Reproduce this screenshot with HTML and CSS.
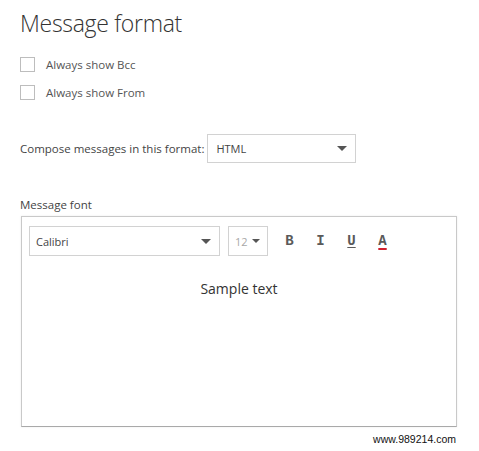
FILE: index.html
```html
<!DOCTYPE html>
<html lang="en">
<head>
<meta charset="utf-8">
<title>Message format</title>
<link rel="stylesheet" href="styles.css">
</head>
<body>
<div class="page">
  <h1 class="title">Message format</h1>

  <label class="check-row"><span class="checkbox"></span><span class="check-label">Always show Bcc</span></label>
  <label class="check-row"><span class="checkbox"></span><span class="check-label">Always show From</span></label>

  <div class="compose-row">
    <span class="compose-label">Compose messages in this format:</span>
    <div class="select select-format">
      <span class="select-value">HTML</span>
      <span class="caret"></span>
    </div>
  </div>

  <div class="section-label">Message font</div>

  <div class="font-box">
    <div class="toolbar">
      <div class="select select-font">
        <span class="select-value">Calibri</span>
        <span class="caret"></span>
      </div>
      <div class="select select-size">
        <span class="select-value muted">12</span>
        <span class="caret small"></span>
      </div>
      <span class="tool tool-b">B</span>
      <span class="tool tool-i">I</span>
      <span class="tool tool-u">U</span>
      <span class="tool tool-a">A</span>
    </div>
    <div class="sample">Sample text</div>
  </div>

  <div class="footer">www.989214.com</div>
</div>
</body>
</html>
```
FILE: styles.css
```css
html, body {
  margin: 0;
  background: #fff;
}

body {
  font-family: "Open Sans", "Noto Sans", sans-serif;
  color: #444;
}

.page {
  width: 436px;
  padding: 7px 0 0 20px;
  display: flex;
  flex-direction: column;
}

.title {
  margin: 0;
  font-size: 23px;
  line-height: 32px;
  font-weight: 300;
  color: #333;
  letter-spacing: -0.3px;
}

.check-row {
  display: flex;
  align-items: center;
  height: 28px;
  gap: 11px;
}

.check-row:first-of-type {
  margin-top: 11px;
}

.checkbox {
  width: 13px;
  height: 13px;
  border: 1px solid #bdbdbd;
  background: #fff;
}

.check-label {
  font-size: 11.5px;
  color: #555;
}

.compose-row {
  display: flex;
  align-items: center;
  margin-top: 28px;
  gap: 3px;
}

.compose-label {
  font-size: 11.5px;
  color: #444;
}

.select {
  display: flex;
  align-items: center;
  justify-content: space-between;
  box-sizing: border-box;
  border: 1px solid #d2d2d2;
  background: #fff;
}

.select-format {
  width: 149px;
  height: 29px;
  padding: 0 8px 0 8px;
}

.select-value {
  font-size: 11px;
  color: #444;
}

.select-value.muted {
  color: #a8a8a8;
}

.caret {
  width: 0;
  height: 0;
  border-left: 5px solid transparent;
  border-right: 5px solid transparent;
  border-top: 5px solid #555;
}

.caret.small {
  border-left-width: 4px;
  border-right-width: 4px;
  border-top-width: 4px;
}

.section-label {
  margin-top: 32px;
  font-size: 11.5px;
  line-height: 20px;
  color: #444;
}

.font-box {
  box-sizing: border-box;
  width: 436px;
  height: 211px;
  margin-left: 1px;
  margin-top: 1px;
  border: 1px solid #c9c9c9;
  border-bottom-color: #a9a9a9;
  box-shadow: 0 0 2px rgba(0, 0, 0, 0.08);
  display: flex;
  flex-direction: column;
}

.toolbar {
  display: flex;
  align-items: center;
  padding: 9px 0 0 7px;
}

.select-font {
  width: 191px;
  height: 30px;
  padding: 0 8px 0 6px;
}

.select-size {
  width: 40px;
  height: 30px;
  margin-left: 8px;
  padding: 0 7px 0 6px;
}

.tool {
  width: 31px;
  text-align: center;
  font-family: "Liberation Mono", "DejaVu Sans Mono", monospace;
  font-weight: bold;
  font-size: 14px;
  line-height: 16px;
  color: #5a5a5a;
}

.tool-b {
  margin-left: 6px;
}

.tool-u {
  text-decoration: underline;
  text-underline-offset: 2px;
}

.tool-a {
  text-decoration: underline;
  text-decoration-color: #d0202e;
  text-decoration-thickness: 2px;
  text-underline-offset: 3px;
}

.sample {
  margin-top: 23px;
  text-align: center;
  font-size: 14px;
  line-height: 20px;
  color: #333;
}

.footer {
  align-self: flex-end;
  margin-top: 4px;
  font-family: "Liberation Sans", Arial, sans-serif;
  font-size: 10.5px;
  line-height: 16px;
  color: #111;
}
```
